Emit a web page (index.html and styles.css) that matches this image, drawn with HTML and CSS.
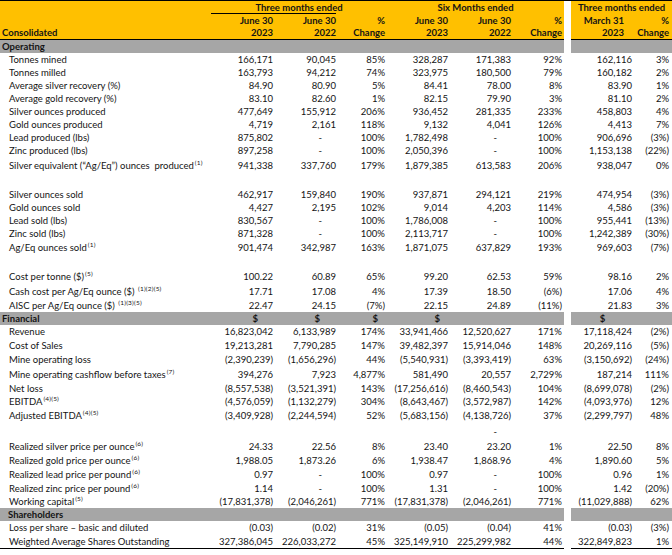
FILE: index.html
```html
<!DOCTYPE html>
<html>
<head>
<meta charset="utf-8">
<link rel="stylesheet" href="styles.css">
</head>
<body>
<div class="sheet">
  <div class="r hd top">
    <div class="l"></div>
    <div class="s3 ctr ul">Three months ended</div>
    <div class="s3 ctr">Six Months ended</div>
    <div class="g"></div>
    <div class="s2 ctr">Three months ended</div>
  </div>
  <div class="r hd">
    <div class="l"></div><div>June 30</div><div>June 30</div><div>%</div><div>June 30</div><div>June 30</div><div>%</div><div class="g"></div><div class="m">March 31</div><div class="p8">%</div>
  </div>
  <div class="r hd bb">
    <div class="l lt">Consolidated</div><div>2023</div><div>2022</div><div>Change</div><div>2023</div><div>2022</div><div>Change</div><div class="g"></div><div class="m">2023</div><div class="p8">Change</div>
  </div>

  <div class="r sec">
    <div class="l lt">Operating</div><div></div><div></div><div></div><div></div><div></div><div></div><div class="g"></div><div></div><div></div>
  </div>
  <div class="r"><div class="l">Tonnes mined</div><div>166,171</div><div>90,045</div><div>85%</div><div>328,287</div><div>171,383</div><div>92%</div><div class="g"></div><div>162,116</div><div class="p8">3%</div></div>
  <div class="r"><div class="l">Tonnes milled</div><div>163,793</div><div>94,212</div><div>74%</div><div>323,975</div><div>180,500</div><div>79%</div><div class="g"></div><div>160,182</div><div class="p8">2%</div></div>
  <div class="r"><div class="l">Average silver recovery (%)</div><div>84.90</div><div>80.90</div><div>5%</div><div>84.41</div><div>78.00</div><div>8%</div><div class="g"></div><div>83.90</div><div class="p8">1%</div></div>
  <div class="r"><div class="l">Average gold recovery (%)</div><div>83.10</div><div>82.60</div><div>1%</div><div>82.15</div><div>79.90</div><div>3%</div><div class="g"></div><div>81.10</div><div class="p8">2%</div></div>
  <div class="r"><div class="l">Silver ounces produced</div><div>477,649</div><div>155,912</div><div>206%</div><div>936,452</div><div>281,335</div><div>233%</div><div class="g"></div><div>458,803</div><div class="p8">4%</div></div>
  <div class="r"><div class="l">Gold ounces produced</div><div>4,719</div><div>2,161</div><div>118%</div><div>9,132</div><div>4,041</div><div>126%</div><div class="g"></div><div>4,413</div><div class="p8">7%</div></div>
  <div class="r"><div class="l">Lead produced (lbs)</div><div>875,802</div><div class="dash">-</div><div>100%</div><div>1,782,498</div><div class="dash">-</div><div>100%</div><div class="g"></div><div>906,696</div><div class="p8">(3%)</div></div>
  <div class="r"><div class="l">Zinc produced (lbs)</div><div>897,258</div><div class="dash">-</div><div>100%</div><div>2,050,396</div><div class="dash">-</div><div>100%</div><div class="g"></div><div>1,153,138</div><div class="p8">(22%)</div></div>
  <div class="r t16"><div class="l">Silver equivalent (“Ag/Eq”) ounces&nbsp; produced<span class="sup">(1)</span></div><div>941,338</div><div>337,760</div><div>179%</div><div>1,879,385</div><div>613,583</div><div>206%</div><div class="g"></div><div>938,047</div><div class="p8">0%</div></div>
  <div class="r t15"><div class="l"></div></div>
  <div class="r"><div class="l">Silver ounces sold</div><div>462,917</div><div>159,840</div><div>190%</div><div>937,871</div><div>294,121</div><div>219%</div><div class="g"></div><div>474,954</div><div class="p8">(3%)</div></div>
  <div class="r"><div class="l">Gold ounces sold</div><div>4,427</div><div>2,195</div><div>102%</div><div>9,014</div><div>4,203</div><div>114%</div><div class="g"></div><div>4,586</div><div class="p8">(3%)</div></div>
  <div class="r"><div class="l">Lead sold (lbs)</div><div>830,567</div><div class="dash">-</div><div>100%</div><div>1,786,008</div><div class="dash">-</div><div>100%</div><div class="g"></div><div>955,441</div><div class="p8">(13%)</div></div>
  <div class="r"><div class="l">Zinc sold (lbs)</div><div>871,328</div><div class="dash">-</div><div>100%</div><div>2,113,717</div><div class="dash">-</div><div>100%</div><div class="g"></div><div>1,242,389</div><div class="p8">(30%)</div></div>
  <div class="r t15"><div class="l">Ag/Eq ounces sold<span class="sup">(1)</span></div><div>901,474</div><div>342,987</div><div>163%</div><div>1,871,075</div><div>637,829</div><div>193%</div><div class="g"></div><div>969,603</div><div class="p8">(7%)</div></div>
  <div class="r t15"><div class="l"></div></div>
  <div class="r t14"><div class="l">Cost per tonne ($)<span class="sup">(5)</span></div><div>100.22</div><div>60.89</div><div>65%</div><div>99.20</div><div>62.53</div><div>59%</div><div class="g"></div><div>98.16</div><div class="p8">2%</div></div>
  <div class="r t15"><div class="l">Cash cost per Ag/Eq ounce ($) <span class="sup">(1)(2)(5)</span></div><div>17.71</div><div>17.08</div><div>4%</div><div>17.39</div><div>18.50</div><div>(6%)</div><div class="g"></div><div>17.06</div><div class="p8">4%</div></div>
  <div class="r"><div class="l">AISC per Ag/Eq ounce ($) <span class="sup">(1)(3)(5)</span></div><div>22.47</div><div>24.15</div><div>(7%)</div><div>22.15</div><div>24.89</div><div>(11%)</div><div class="g"></div><div>21.83</div><div class="p8">3%</div></div>

  <div class="r sec">
    <div class="l lt">Financial</div><div class="d1">$</div><div class="d2">$</div><div class="d3">$</div><div class="d4">$</div><div></div><div></div><div class="g"></div><div class="ctr">$</div><div></div>
  </div>
  <div class="r t14"><div class="l">Revenue</div><div>16,823,042</div><div>6,133,989</div><div>174%</div><div>33,941,466</div><div>12,520,627</div><div>171%</div><div class="g"></div><div>17,118,424</div><div class="p8">(2%)</div></div>
  <div class="r t14"><div class="l">Cost of Sales</div><div>19,213,281</div><div>7,790,285</div><div>147%</div><div>39,482,397</div><div>15,914,046</div><div>148%</div><div class="g"></div><div>20,269,116</div><div class="p8">(5%)</div></div>
  <div class="r t14"><div class="l">Mine operating loss</div><div>(2,390,239)</div><div>(1,656,296)</div><div>44%</div><div>(5,540,931)</div><div>(3,393,419)</div><div>63%</div><div class="g"></div><div>(3,150,692)</div><div class="p8">(24%)</div></div>
  <div class="r t15"><div class="l">Mine operating cashflow before taxes<span class="sup">(7)</span></div><div>394,276</div><div>7,923</div><div>4,877%</div><div>581,490</div><div>20,557</div><div>2,729%</div><div class="g"></div><div>187,214</div><div class="p8">111%</div></div>
  <div class="r"><div class="l">Net loss</div><div>(8,557,538)</div><div>(3,521,391)</div><div>143%</div><div>(17,256,616)</div><div>(8,460,543)</div><div>104%</div><div class="g"></div><div>(8,699,078)</div><div class="p8">(2%)</div></div>
  <div class="r t14"><div class="l">EBITDA<span class="sup">(4)(5)</span></div><div>(4,576,059)</div><div>(1,132,279)</div><div>304%</div><div>(8,643,467)</div><div>(3,572,987)</div><div>142%</div><div class="g"></div><div>(4,093,976)</div><div class="p8">12%</div></div>
  <div class="r t14"><div class="l">Adjusted EBITDA<span class="sup">(4)(5)</span></div><div>(3,409,928)</div><div>(2,244,594)</div><div>52%</div><div>(5,683,156)</div><div>(4,138,726)</div><div>37%</div><div class="g"></div><div>(2,299,797)</div><div class="p8">48%</div></div>
  <div class="r t16"><div class="l"></div><div></div><div></div><div></div><div></div><div class="dash">-</div><div></div><div class="g"></div><div></div><div></div></div>
  <div class="r t15"><div class="l">Realized silver price per ounce<span class="sup">(6)</span></div><div>24.33</div><div>22.56</div><div>8%</div><div>23.40</div><div>23.20</div><div>1%</div><div class="g"></div><div>22.50</div><div class="p8">8%</div></div>
  <div class="r t14"><div class="l">Realized gold price per ounce<span class="sup">(6)</span></div><div>1,988.05</div><div>1,873.26</div><div>6%</div><div>1,938.47</div><div>1,868.96</div><div>4%</div><div class="g"></div><div>1,890.60</div><div class="p8">5%</div></div>
  <div class="r t14"><div class="l">Realized lead price per pound<span class="sup">(6)</span></div><div>0.97</div><div class="dash">-</div><div>100%</div><div>0.97</div><div class="dash">-</div><div>100%</div><div class="g"></div><div>0.96</div><div class="p8">1%</div></div>
  <div class="r"><div class="l">Realized zinc price per pound<span class="sup">(6)</span></div><div>1.14</div><div class="dash">-</div><div>100%</div><div>1.31</div><div class="dash">-</div><div>100%</div><div class="g"></div><div>1.42</div><div class="p8">(20%)</div></div>
  <div class="r"><div class="l">Working capital<span class="sup">(5)</span></div><div>(17,831,378)</div><div>(2,046,261)</div><div>771%</div><div>(17,831,378)</div><div>(2,046,261)</div><div>771%</div><div class="g"></div><div>(11,029,888)</div><div class="p8">62%</div></div>

  <div class="r sec">
    <div class="l l8">Shareholders</div><div></div><div></div><div></div><div></div><div></div><div></div><div class="g"></div><div></div><div></div>
  </div>
  <div class="r t14"><div class="l">Loss per share – basic and diluted</div><div>(0.03)</div><div>(0.02)</div><div>31%</div><div>(0.05)</div><div>(0.04)</div><div>41%</div><div class="g"></div><div>(0.03)</div><div class="p8">(3%)</div></div>
  <div class="r t14 last"><div class="l">Weighted Average Shares Outstanding</div><div>327,386,045</div><div>226,033,272</div><div>45%</div><div>325,149,910</div><div>225,299,982</div><div>44%</div><div class="g"></div><div>322,849,823</div><div class="p8">1%</div></div>
</div>
</body>
</html>
```

FILE: styles.css
```css
* {
  box-sizing: border-box;
}

body {
  margin: 0;
  background: #ffffff;
  font-family: Lato, "Liberation Sans", sans-serif;
  font-size: 9.5px;
  color: #141414;
}

.sheet {
  width: 672px;
}

.r {
  display: grid;
  grid-template-columns: 211px 64px 63px 49px 63px 63px 51px 7px 63px 38px;
  height: 13px;
  line-height: 13px;
}

.r > div {
  text-align: right;
  padding-right: 2px;
  white-space: nowrap;
  overflow: visible;
}

.r > .l {
  text-align: left;
  padding-left: 9px;
  padding-right: 0;
}

.r > .lt {
  padding-left: 2px;
}

.r > .l8 {
  padding-left: 8px;
}

.r > .g {
  padding: 0;
  background: #ffffff;
}

.r > .p8 {
  padding-right: 3px;
}

.r > .m {
  padding-right: 10px;
}

.r > .ctr {
  text-align: center;
  padding-right: 0;
}

.r > .dash {
  padding-right: 16px;
}

.s3 {
  grid-column: span 3;
}

.s2 {
  grid-column: span 2;
}

.t14 {
  height: 14px;
  line-height: 14px;
}

.t15 {
  height: 15px;
  line-height: 16px;
}

.t16 {
  height: 16px;
  line-height: 17px;
}

.hd {
  font-weight: 700;
}

.hd > div {
  background: #ffc000;
}

.top {
  height: 14px;
  border-top: 1px solid #000;
}

.hd > .ul {
  background: linear-gradient(#000, #000) left bottom / 125px 1px no-repeat, #ffc000;
}

.bb {
  line-height: 12px;
}

.bb > div:not(.g) {
  border-bottom: 2px solid #000;
}

.sec {
  font-weight: 700;
}

.sec > div:not(.g) {
  background: #a6a6a6;
}

.r > .d1 { padding-right: 17px; }
.r > .d2 { padding-right: 18px; }
.r > .d3 { padding-right: 9px; }
.r > .d4 { padding-right: 10px; }

.sup {
  font-size: 6.5px;
  position: relative;
  top: -4px;
  margin-left: 1px;
  letter-spacing: 0.2px;
}

.last {
  line-height: 13px;
}

.last > div:not(.g) {
  border-bottom: 1px solid #000;
}
```
